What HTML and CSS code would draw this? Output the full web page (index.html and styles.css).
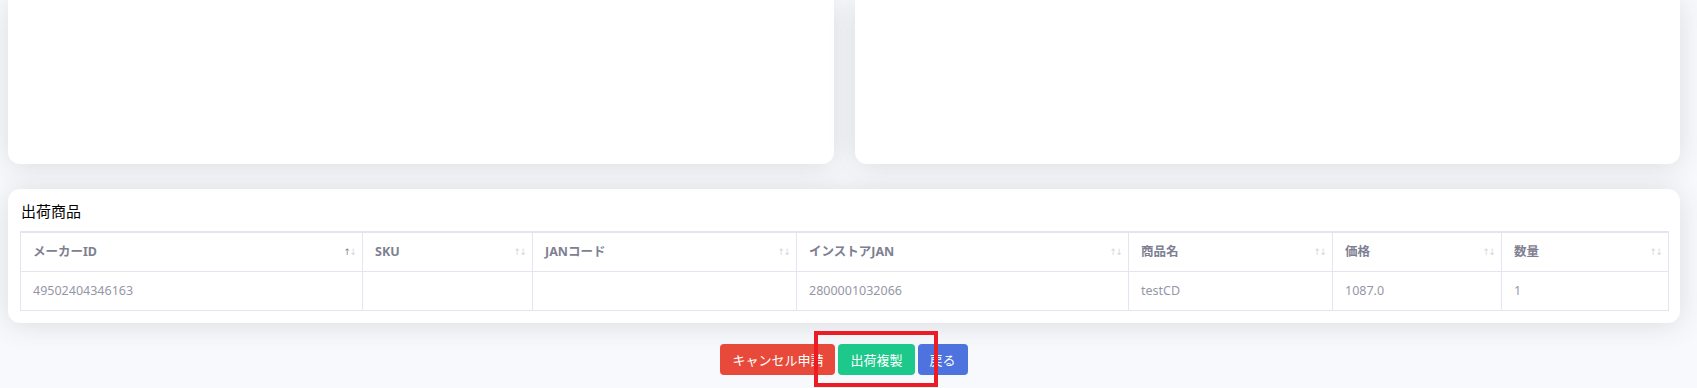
FILE: index.html
```html
<!DOCTYPE html>
<html lang="ja">

<head>
    <meta charset="UTF-8">
    <meta name="viewport" content="width=device-width, initial-scale=1.0">
    <title>出荷詳細</title>
    <link rel="stylesheet" href="styles.css">
</head>

<body>
    <div class="row-top">
        <div class="card card-top"></div>
        <div class="card card-top"></div>
    </div>

    <div class="card card-items">
        <h6 class="card-title">出荷商品</h6>
        <table class="items">
            <colgroup>
                <col class="c-maker">
                <col class="c-sku">
                <col class="c-jan">
                <col class="c-instore">
                <col class="c-name">
                <col class="c-price">
                <col class="c-qty">
            </colgroup>
            <thead>
                <tr>
                    <th class="sorting sorting-asc">メーカーID</th>
                    <th class="sorting">SKU</th>
                    <th class="sorting">JANコード</th>
                    <th class="sorting">インストアJAN</th>
                    <th class="sorting">商品名</th>
                    <th class="sorting">価格</th>
                    <th class="sorting">数量</th>
                </tr>
            </thead>
            <tbody>
                <tr>
                    <td>49502404346163</td>
                    <td></td>
                    <td></td>
                    <td>2800001032066</td>
                    <td>testCD</td>
                    <td>1087.0</td>
                    <td>1</td>
                </tr>
            </tbody>
        </table>
    </div>

    <div class="actions">
        <div class="btn-group">
            <button class="btn btn-danger">キャンセル申請</button>
            <button class="btn btn-success">出荷複製</button>
            <button class="btn btn-primary">戻る</button>
            <!-- marca de revisión -->
            <span class="highlight"></span>
        </div>
    </div>
</body>

</html>
```

FILE: styles.css
```css
body {
    margin: 0;
    padding: 0 17px 0 8px;
    height: 388px;
    overflow: hidden;
    background-color: #f8f9fc;
    font-family: "Noto Sans", "Noto Sans CJK JP", sans-serif;
    color: #858796;
    box-sizing: border-box;
}

.row-top {
    display: grid;
    grid-template-columns: 1fr 1fr;
    gap: 21px;
    margin-bottom: 25px;
}

.card {
    background-color: #fff;
    border-radius: 12px;
    box-shadow: 0 2px 28px 0 rgba(58, 59, 69, 0.15);
}

.card-top {
    height: 164px;
    /* la parte de arriba queda fuera de la vista */
    border-radius: 0 0 12px 12px;
}

.card-items {
    padding: 12px;
}

.card-title {
    margin: 0 0 10px 1px;
    font-size: 15px;
    line-height: 20px;
    font-weight: 400;
    color: #000;
}

.items {
    width: 100%;
    border-collapse: collapse;
    table-layout: fixed;
    border-top: 2px solid #e3e6f0;
}

.c-maker { width: 342px; }
.c-sku { width: 170px; }
.c-jan { width: 264px; }
.c-instore { width: 332px; }
.c-name { width: 204px; }
.c-price { width: 169px; }
.c-qty { width: 167px; }

.items th,
.items td {
    border: 1px solid #e3e6f0;
    padding: 11px 12px;
    line-height: 16px;
    font-size: 12.5px;
    text-align: left;
    white-space: nowrap;
}

.items th {
    position: relative;
    font-weight: 700;
    color: #7e8092;
    padding-right: 30px;
}

.items td {
    color: #9597a8;
}

.sorting::before,
.sorting::after {
    position: absolute;
    top: 50%;
    transform: translateY(-50%);
    font-family: "DejaVu Sans", sans-serif;
    font-size: 9px;
    font-weight: 400;
    color: #858796;
    opacity: 0.35;
}

.sorting::before {
    content: "\2191";
    right: 11px;
}

.sorting::after {
    content: "\2193";
    right: 5px;
}

.sorting-asc::before {
    opacity: 1;
}

.actions {
    display: flex;
    justify-content: center;
    margin-top: 21px;
}

.btn-group {
    position: relative;
    display: flex;
    gap: 3px;
}

.btn {
    border: none;
    border-radius: 4px;
    padding: 6px 12px;
    font-family: "Noto Sans CJK JP", sans-serif;
    font-size: 13px;
    line-height: 19px;
    color: #fff;
    cursor: pointer;
}

.btn-danger {
    background-color: #e74a3b;
}

.btn-success {
    background-color: #1cc88a;
}

.btn-primary {
    background-color: #4e73df;
}

.highlight {
    position: absolute;
    left: 94px;
    top: -13px;
    width: 124px;
    height: 56px;
    border: 4px solid #ec1c24;
    box-sizing: border-box;
    pointer-events: none;
}
```
